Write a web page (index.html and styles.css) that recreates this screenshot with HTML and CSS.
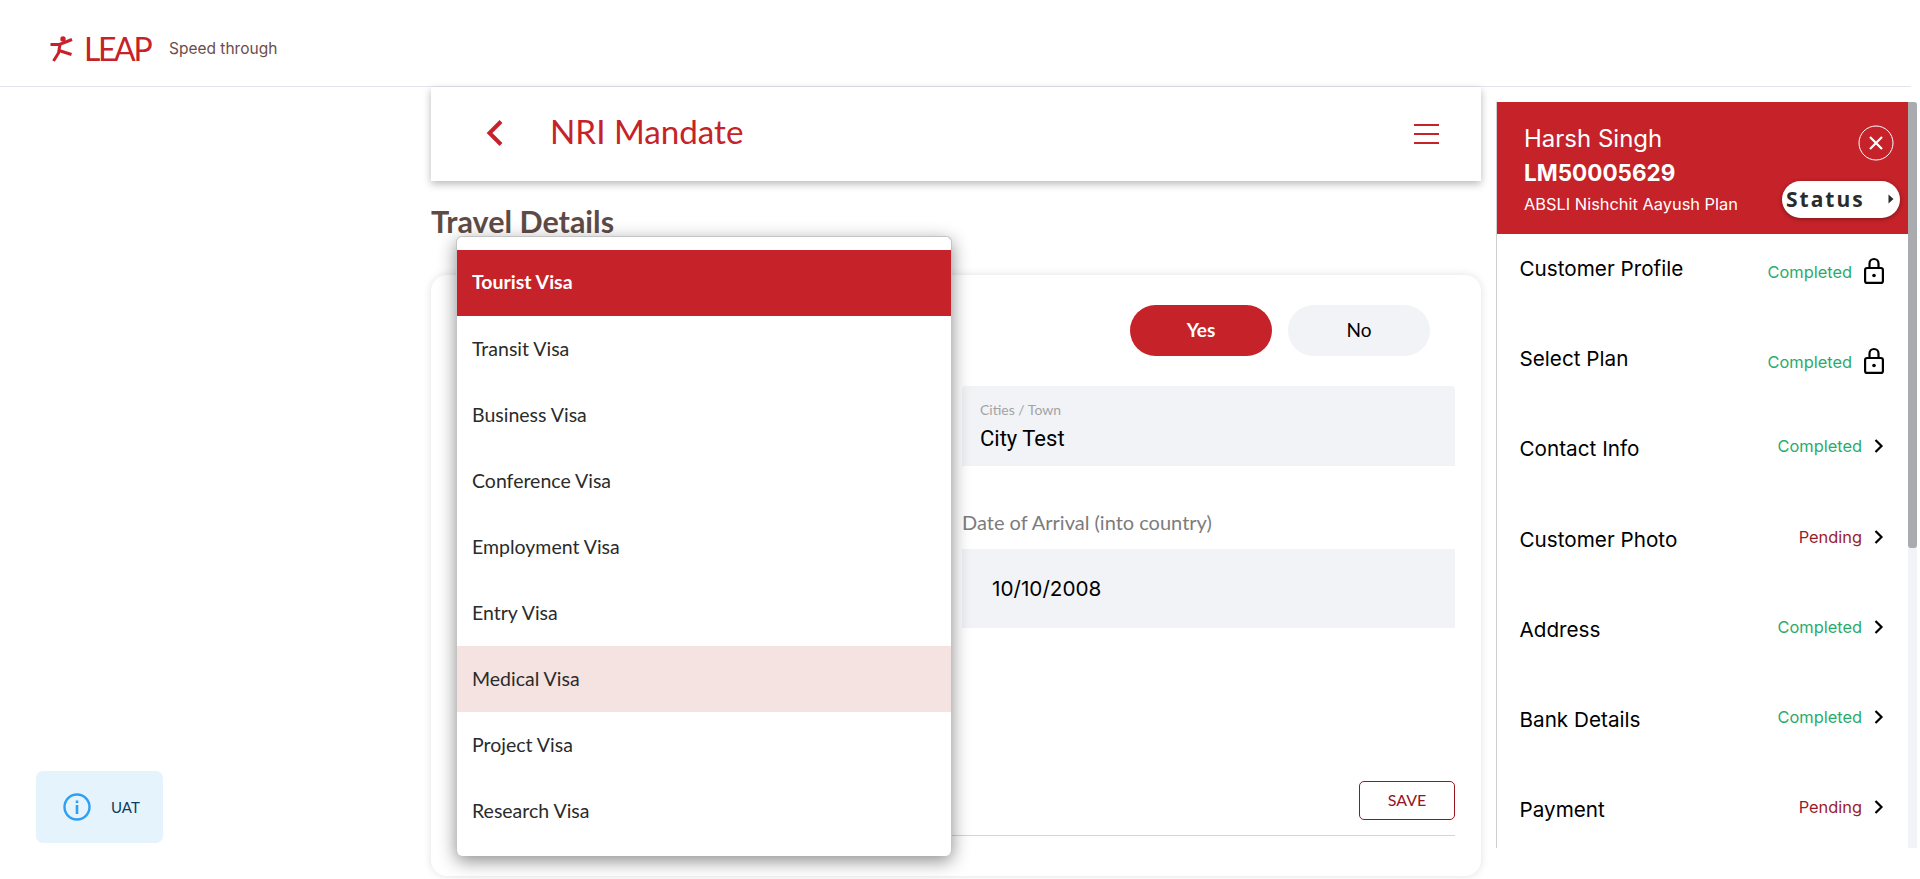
FILE: index.html
```html
<!DOCTYPE html>
<html>
<head>
<meta http-equiv="Content-Type" content="text/html; charset=utf-8"/>
<title>NRI Mandate</title>
<link rel="stylesheet" href="styles.css">
</head>
<body>

<header class="topbar">
  <svg class="logo-mark" viewBox="0 0 24 28" width="24" height="28">
    <circle cx="14" cy="5" r="2.7" fill="#c62229"/>
    <path d="M1.5 10.5 L10.5 10.5 L23 5.5 M11 10.5 L9.5 19 L4.5 27 M10 16.5 L22.5 20.5" fill="none" stroke="#c62229" stroke-width="3"/>
  </svg>
  <span class="logo-text">LEAP</span>
  <span class="tagline">Speed through</span>
</header>

<div class="shell">
  <main class="content">
    <div class="titlebar">
      <svg class="back" viewBox="0 0 20 28" width="20" height="28">
        <path d="M16 1.5 L4.5 13 L16 24.5" fill="none" stroke="#c62229" stroke-width="4"/>
      </svg>
      <h1>NRI Mandate</h1>
      <div class="burger"><i></i><i></i><i></i></div>
    </div>

    <h2>Travel Details</h2>

    <section class="card">
      <div class="toggle-row">
        <span class="toggle toggle-on">Yes</span>
        <span class="toggle">No</span>
      </div>

      <div class="field-row">
        <div class="floating">
          <label>Cities / Town</label>
          <div class="value">City Test</div>
        </div>
      </div>

      <div class="field-row">
        <div class="dated">
          <label>Date of Arrival (into country)</label>
          <div class="date-box">10/10/2008</div>
        </div>
      </div>

      <div class="actions">
        <span class="save">SAVE</span>
      </div>
      <hr>
    </section>
  </main>

  <aside class="sidebar">
    <div class="panel">
      <div class="lead">
        <div class="lead-text">
          <div class="lead-name">Harsh Singh</div>
          <div class="lead-id">LM50005629</div>
          <div class="lead-plan">ABSLI Nishchit Aayush Plan</div>
        </div>
        <div class="lead-side">
          <svg class="close" viewBox="0 0 36 36" width="36" height="36">
            <circle cx="18" cy="18" r="17" fill="none" stroke="#fff" stroke-width="1"/>
            <path d="M12 12 L24 24 M24 12 L12 24" stroke="#fff" stroke-width="2.2"/>
          </svg>
          <div class="status-pill">
            <span>Status</span>
            <svg viewBox="0 0 6 10" width="6" height="10"><path d="M0.5 0.5 L5.5 5 L0.5 9.5 Z" fill="#2b2b2b"/></svg>
          </div>
        </div>
      </div>

      <ul class="steps">
        <li class="step step-locked">
          <span class="step-name">Customer Profile</span>
          <span class="step-status done">Completed</span>
          <svg viewBox="0 0 20 27" width="20" height="27"><path d="M5.5 11 V6.5 a4.5 4.5 0 0 1 9 0 V11" fill="none" stroke="#000" stroke-width="2.2"/><rect x="1.1" y="11" width="17.8" height="14.9" rx="2" fill="none" stroke="#000" stroke-width="2.2"/><circle cx="10" cy="18.5" r="1.8" fill="#000"/></svg>
        </li>
        <li class="step step-locked">
          <span class="step-name">Select Plan</span>
          <span class="step-status done">Completed</span>
          <svg viewBox="0 0 20 27" width="20" height="27"><path d="M5.5 11 V6.5 a4.5 4.5 0 0 1 9 0 V11" fill="none" stroke="#000" stroke-width="2.2"/><rect x="1.1" y="11" width="17.8" height="14.9" rx="2" fill="none" stroke="#000" stroke-width="2.2"/><circle cx="10" cy="18.5" r="1.8" fill="#000"/></svg>
        </li>
        <li class="step">
          <span class="step-name">Contact Info</span>
          <span class="step-status done">Completed</span>
          <svg viewBox="0 0 10 14" width="10" height="14"><path d="M1.5 1 L7.5 7 L1.5 13" fill="none" stroke="#000" stroke-width="2.2"/></svg>
        </li>
        <li class="step">
          <span class="step-name">Customer Photo</span>
          <span class="step-status wait">Pending</span>
          <svg viewBox="0 0 10 14" width="10" height="14"><path d="M1.5 1 L7.5 7 L1.5 13" fill="none" stroke="#000" stroke-width="2.2"/></svg>
        </li>
        <li class="step">
          <span class="step-name">Address</span>
          <span class="step-status done">Completed</span>
          <svg viewBox="0 0 10 14" width="10" height="14"><path d="M1.5 1 L7.5 7 L1.5 13" fill="none" stroke="#000" stroke-width="2.2"/></svg>
        </li>
        <li class="step">
          <span class="step-name">Bank Details</span>
          <span class="step-status done">Completed</span>
          <svg viewBox="0 0 10 14" width="10" height="14"><path d="M1.5 1 L7.5 7 L1.5 13" fill="none" stroke="#000" stroke-width="2.2"/></svg>
        </li>
        <li class="step">
          <span class="step-name">Payment</span>
          <span class="step-status wait">Pending</span>
          <svg viewBox="0 0 10 14" width="10" height="14"><path d="M1.5 1 L7.5 7 L1.5 13" fill="none" stroke="#000" stroke-width="2.2"/></svg>
        </li>
      </ul>
    </div>
    <div class="scrolltrack"><div class="scrollthumb"></div></div>
  </aside>
</div>

<!-- open select menu, lies over the form -->
<ul class="menu">
  <li class="menu-item selected">Tourist Visa</li>
  <li class="menu-item">Transit Visa</li>
  <li class="menu-item">Business Visa</li>
  <li class="menu-item">Conference Visa</li>
  <li class="menu-item">Employment Visa</li>
  <li class="menu-item">Entry Visa</li>
  <li class="menu-item hover">Medical Visa</li>
  <li class="menu-item">Project Visa</li>
  <li class="menu-item">Research Visa</li>
</ul>

<div class="toast">
  <svg viewBox="0 0 28 28" width="28" height="28">
    <circle cx="14" cy="14" r="12.5" fill="none" stroke="#2f9ff2" stroke-width="2.4"/>
    <rect x="12.7" y="12" width="2.6" height="9" fill="#2f9ff2"/>
    <rect x="12.7" y="7.5" width="2.6" height="2.6" fill="#2f9ff2"/>
  </svg>
  <span>UAT</span>
</div>

</body>
</html>
```

FILE: styles.css
```css
* {
  box-sizing: border-box;
}

html, body {
  height: 100%;
}

body {
  margin: 0;
  overflow: hidden;
  background-color: white;
  font-family: Lato, sans-serif;
  color: #000;
}

/* top bar */
.topbar {
  display: flex;
  align-items: center;
  width: 1911px;
  height: 87px;
  padding: 10px 0 0 49px;
  border-bottom: 1px solid #e4e4ee;
}

.logo-mark {
  margin-right: 11px;
}

.logo-text {
  width: 85px;
  font-size: 32px;
  letter-spacing: -2.4px;
  color: #c62229;
}

.tagline {
  font-family: Inter, sans-serif;
  font-size: 15.5px;
  color: #6d4c4c;
}

/* page columns */
.shell {
  display: grid;
  grid-template-columns: 1050px 421px;
  column-gap: 15px;
  padding-left: 431px;
}

.titlebar {
  display: flex;
  align-items: center;
  height: 94px;
  padding: 0 42px 0 54px;
  background-color: white;
  box-shadow: 0 3px 8px rgba(0, 0, 0, 0.28);
}

.titlebar h1 {
  flex: 1;
  margin: 0 0 7px 45px;
  font-size: 33.2px;
  font-weight: 400;
  color: #c62229;
}

.burger i {
  display: block;
  width: 25px;
  height: 2px;
  margin: 7px 0;
  background-color: #c62229;
}

h2 {
  height: 94px;
  margin: 0;
  padding-top: 20px;
  font-size: 30.5px;
  font-weight: 700;
  color: #5f4b46;
  line-height: 40px;
}

.card {
  height: 601px;
  padding: 30px 26px 0 0;
  border-radius: 16px;
  background-color: white;
  box-shadow: 0 0 8px rgba(0, 0, 0, 0.12);
}

.toggle-row {
  display: flex;
  justify-content: flex-end;
  gap: 16px;
  padding-right: 25px;
}

.toggle {
  width: 142px;
  height: 51px;
  border-radius: 26px;
  background-color: #f1f3f7;
  font-size: 19px;
  line-height: 50px;
  text-align: center;
}

.toggle-on {
  background-color: #c62229;
  font-weight: 700;
  color: white;
}

.field-row {
  display: flex;
  justify-content: flex-end;
}

.floating {
  width: 493px;
  height: 80px;
  margin-top: 30px;
  padding: 15px 18px 0;
  border-radius: 4px 4px 0 0;
  background-color: #f1f3f7;
}

.floating label {
  display: block;
  font-size: 14px;
  line-height: 18px;
  color: #a3a3a3;
}

.floating .value {
  margin-top: 8px;
  font-family: Roboto, sans-serif;
  font-size: 22px;
  line-height: 24px;
}

.dated {
  width: 493px;
  margin-top: 38px;
}

.dated label {
  display: block;
  font-size: 20px;
  color: #7c7c7c;
  line-height: 36px;
}

.date-box {
  height: 79px;
  margin-top: 9px;
  padding-left: 30px;
  background-color: #f1f3f7;
  font-family: Inter, sans-serif;
  font-size: 20.7px;
  line-height: 79px;
}

.actions {
  display: flex;
  justify-content: flex-end;
  margin-top: 153px;
}

.save {
  width: 96px;
  height: 39px;
  border: 1px solid #96151f;
  border-radius: 5px;
  font-size: 16px;
  color: #96151f;
  line-height: 36px;
  text-align: center;
}

.card hr {
  height: 1px;
  margin: 15px 0 0 40px;
  border: none;
  background-color: #d4d4d4;
}

/* right status panel */
.sidebar {
  display: flex;
  height: 746px;
  margin-top: 15px;
}

.panel {
  flex: 1;
  overflow: hidden;
  border-left: 1px solid #cfcfcf;
}

.lead {
  display: flex;
  justify-content: space-between;
  height: 132px;
  padding: 22px 8px 0 27px;
  background-color: #c62229;
  color: white;
}

.lead-name {
  font-family: Inter, sans-serif;
  font-size: 24px;
  line-height: 30px;
}

.lead-id {
  margin-top: 4px;
  font-family: Inter, sans-serif;
  font-size: 22.5px;
  font-weight: 700;
  line-height: 30px;
}

.lead-plan {
  margin-top: 6px;
  font-family: Inter, sans-serif;
  font-size: 16.4px;
  line-height: 20px;
}

.lead-side {
  display: flex;
  flex-direction: column;
  align-items: flex-end;
  padding-top: 1px;
}

.close {
  display: block;
  margin-right: 6px;
}

.status-pill {
  display: flex;
  align-items: center;
  justify-content: space-between;
  width: 118px;
  height: 37px;
  margin-top: 20px;
  padding: 0 6px 2px 4px;
  border-radius: 19px;
  background-color: white;
  box-shadow: 0 1px 4px rgba(0, 0, 0, 0.4);
  font-family: "Open Sans", sans-serif;
  font-size: 21px;
  font-weight: 700;
  letter-spacing: 2px;
  color: #2b2b2b;
}

.steps {
  margin: 0;
  padding: 0;
  list-style: none;
}

.step {
  display: flex;
  align-items: flex-start;
  height: 90.2px;
  padding: 23px 24px 0 18px;
}

.step-name {
  flex: 1;
  padding-left: 4.5px;
  font-family: Inter, sans-serif;
  font-size: 20.7px;
  line-height: 24px;
}

.step-status {
  margin: -3px 12px 0 0;
  font-family: Inter, sans-serif;
  font-size: 16.4px;
  line-height: 24px;
}

.step svg {
  margin-top: 2px;
}

.step-locked .step-status {
  margin: 3px 12px 0 0;
}

.step-locked svg {
  margin-top: 0;
}

.done {
  color: #2aab6b;
}

.wait {
  color: #9b1c2a;
}

.scrolltrack {
  width: 9px;
  background-color: #f1f3f7;
}

.scrollthumb {
  height: 446px;
  border-radius: 0 3px 3px 3px;
  background-color: #a9abae;
}

/* select menu */
.menu {
  position: absolute;
  left: 456px;
  top: 236px;
  width: 496px;
  margin: 0;
  padding: 13px 0 12px;
  list-style: none;
  background-color: white;
  border: 1px solid #c4c4c4;
  border-bottom: none;
  border-radius: 6px;
  box-shadow: 0 5px 18px rgba(0, 0, 0, 0.45);
}

.menu-item {
  height: 66px;
  padding-left: 15px;
  font-size: 19.5px;
  color: #2b2b2b;
  line-height: 65px;
}

.selected {
  background-color: #c62229;
  font-weight: 700;
  line-height: 64px;
  color: white;
}

.hover {
  background-color: #f5e3e1;
}

/* environment badge */
.toast {
  position: absolute;
  left: 36px;
  top: 771px;
  display: flex;
  align-items: center;
  gap: 20px;
  width: 127px;
  height: 72px;
  padding-left: 27px;
  border-radius: 7px;
  background-color: #e5f3fd;
  font-size: 15px;
  color: #0d3c61;
}
```
